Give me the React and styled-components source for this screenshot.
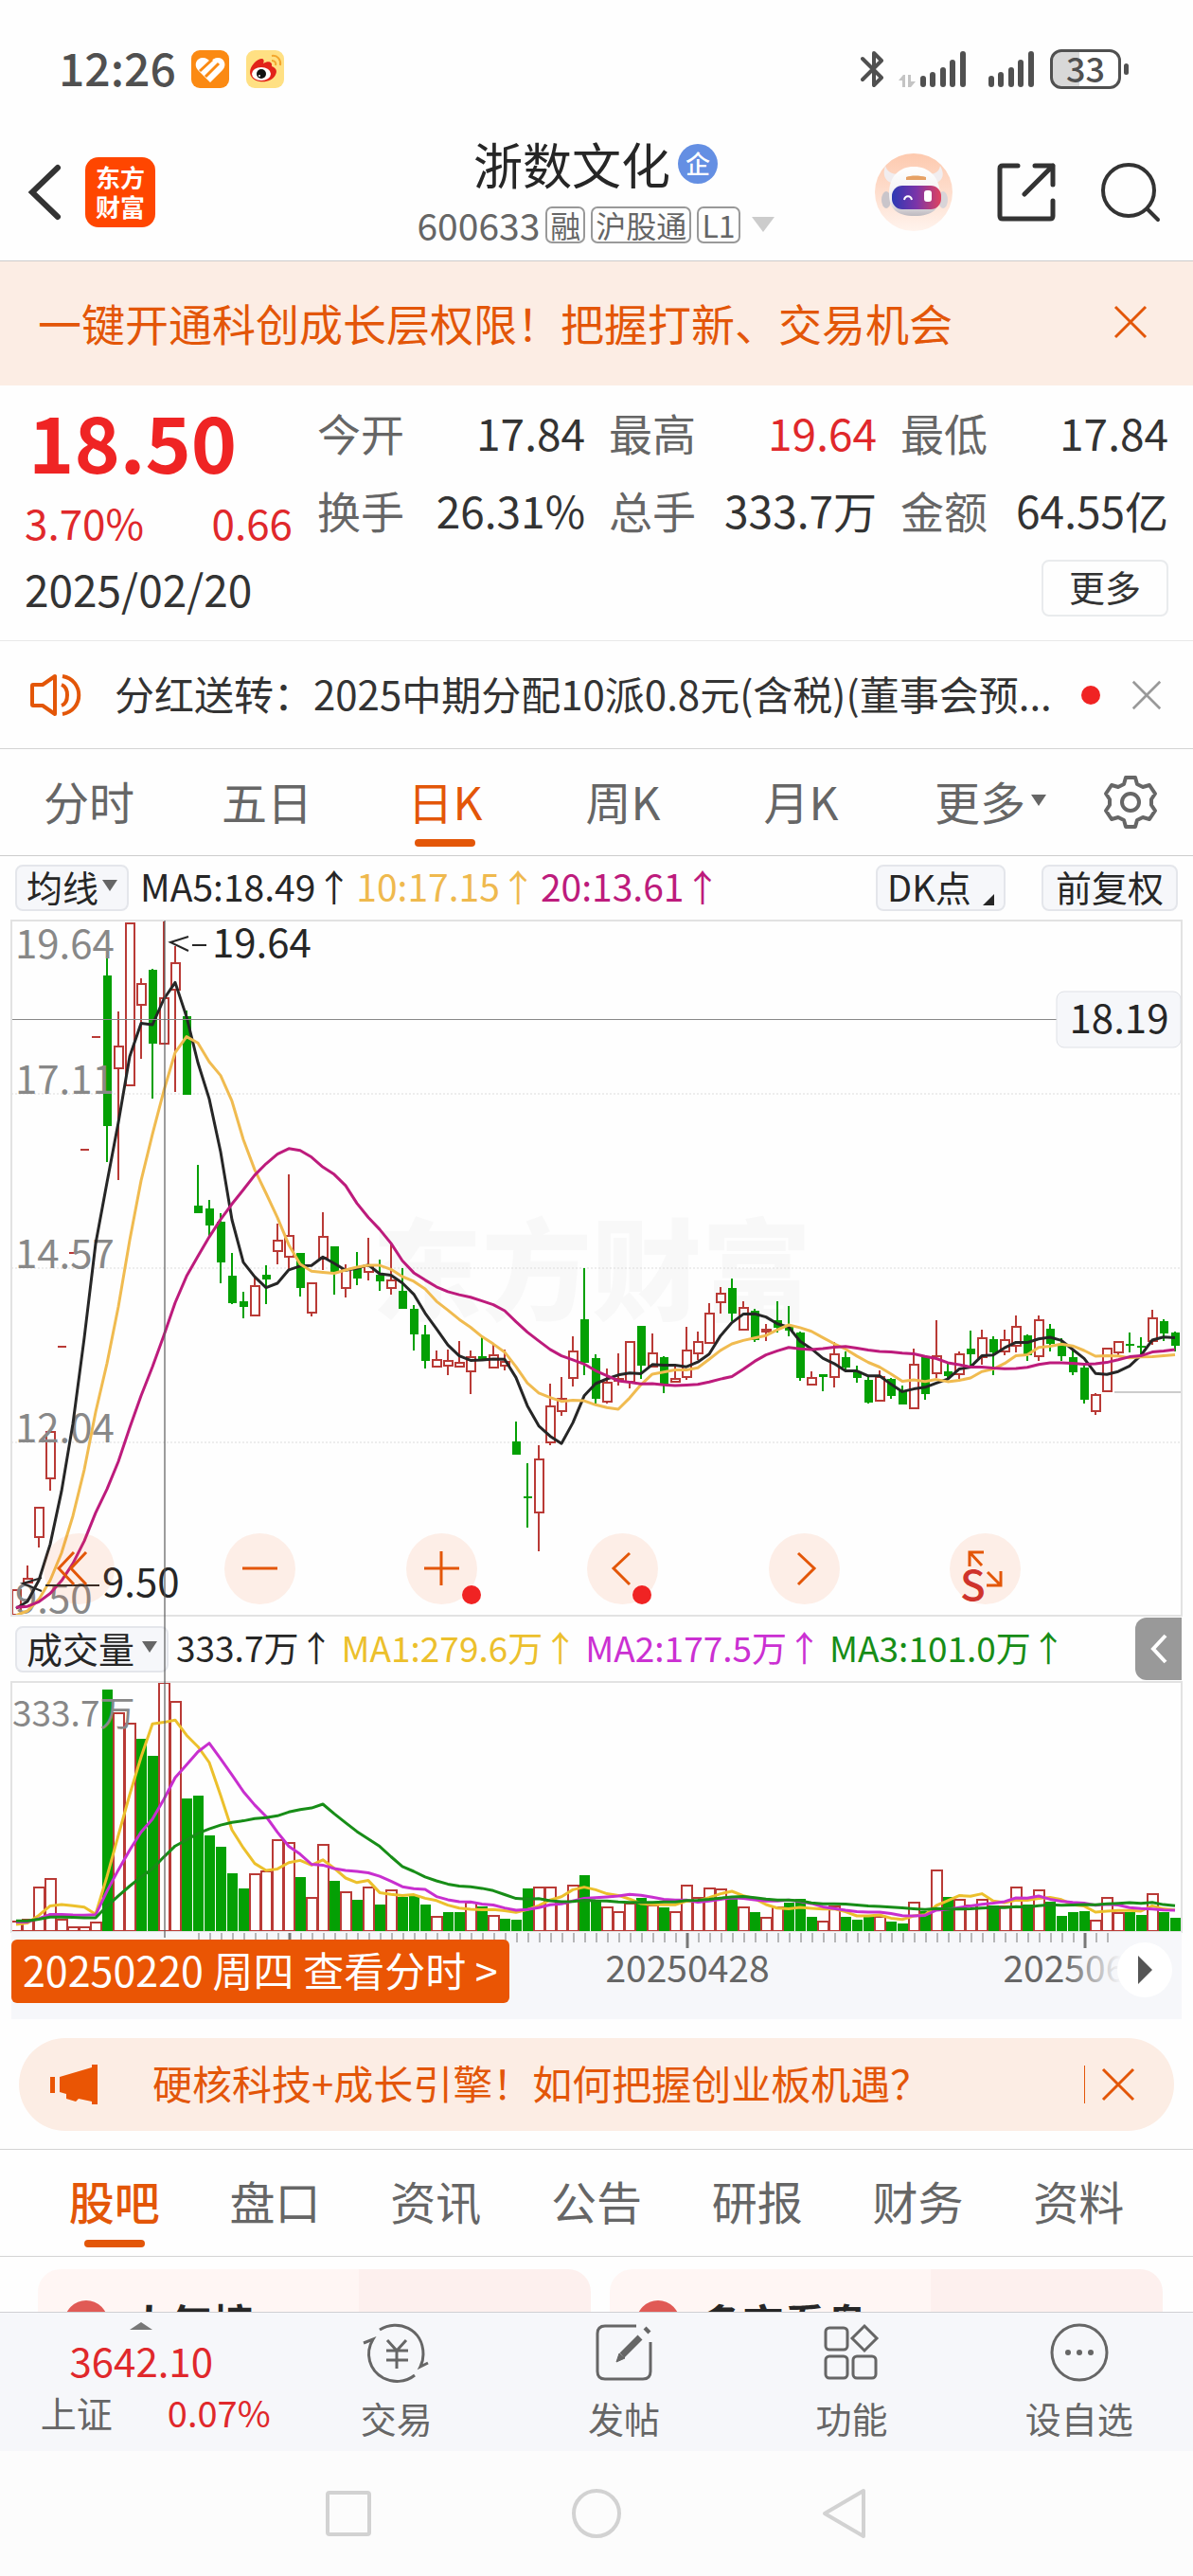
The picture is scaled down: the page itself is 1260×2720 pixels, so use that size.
import React from "react";
import styled, { createGlobalStyle } from "styled-components";

const GlobalStyle = createGlobalStyle`
  * {
    box-sizing: border-box;
  }
  body {
    margin: 0;
    background: #fefefe;
    color: #333;
    font-family: "Noto Sans CJK SC", "Noto Sans", sans-serif;
  }
  button {
    margin: 0;
    padding: 0;
    border: 0;
    background: none;
    color: inherit;
    font: inherit;
    cursor: pointer;
  }
  a {
    color: inherit;
    text-decoration: none;
  }
  svg {
    display: block;
    flex: none;
  }
`;

const ORANGE = "#e35608";
const RED = "#e0282b";
const UP = "#b93a36";
const DOWN = "#04a004";

// one row per day: [direction, high, body top, body bottom, low]
// measured downwards from the top of the price scale
const candles = [
  ["u", 707, 707, 733, 733], ["u", 681, 695, 699, 699], ["u", 620, 620, 651, 662], ["u", 540, 540, 589, 602],
  ["-", 450, 450, 450, 450], ["-", 351, 351, 351, 351], ["-", 242, 242, 242, 242], ["-", 123, 123, 123, 123],
  ["d", 37, 58, 217, 255], ["u", 96, 133, 156, 274], ["u", 3, 3, 174, 174], ["u", 61, 67, 89, 146],
  ["d", 51, 52, 130, 188], ["u", 0, 82, 130, 130], ["u", 27, 45, 73, 181], ["d", 95, 101, 184, 184],
  ["d", 258, 301, 309, 309], ["d", 295, 304, 322, 334], ["d", 309, 318, 361, 383], ["d", 351, 375, 404, 405],
  ["d", 392, 402, 408, 420], ["u", 377, 386, 417, 417], ["d", 364, 374, 379, 405], ["u", 320, 338, 349, 363],
  ["u", 268, 333, 355, 369], ["d", 351, 351, 388, 397], ["u", 383, 383, 414, 418], ["u", 308, 334, 356, 369],
  ["d", 344, 344, 372, 395], ["u", 363, 369, 388, 398], ["d", 350, 366, 378, 385], ["u", 335, 365, 371, 380],
  ["d", 358, 374, 381, 391], ["u", 341, 380, 388, 395], ["d", 367, 391, 410, 410], ["d", 406, 410, 437, 454],
  ["d", 427, 437, 465, 473], ["u", 454, 464, 471, 471], ["u", 453, 465, 470, 480], ["u", 444, 467, 471, 471],
  ["u", 454, 461, 476, 500], ["d", 439, 460, 463, 463], ["u", 448, 459, 472, 472], ["u", 453, 466, 470, 475],
  ["d", 529, 550, 564, 564], ["d", 573, 608, 610, 641], ["u", 554, 569, 625, 666], ["u", 489, 513, 551, 554],
  ["u", 482, 505, 518, 523], ["u", 439, 455, 483, 492], ["d", 367, 421, 467, 480], ["d", 458, 462, 505, 510],
  ["u", 473, 488, 508, 510], ["u", 457, 484, 486, 491], ["u", 444, 445, 487, 494], ["d", 428, 428, 470, 484],
  ["u", 436, 457, 471, 471], ["d", 460, 461, 491, 499], ["u", 471, 484, 487, 487], ["u", 429, 454, 482, 485],
  ["u", 434, 445, 457, 464], ["u", 404, 415, 446, 446], ["u", 387, 394, 403, 415], ["d", 378, 388, 415, 423],
  ["u", 402, 409, 432, 432], ["d", 410, 412, 443, 445], ["u", 426, 432, 434, 444], ["d", 402, 422, 430, 435],
  ["d", 407, 428, 433, 439], ["d", 434, 435, 483, 486], ["u", 476, 483, 490, 490], ["d", 479, 479, 482, 497],
  ["u", 445, 458, 482, 493], ["d", 455, 461, 472, 474], ["d", 470, 477, 483, 488], ["d", 482, 485, 509, 510],
  ["u", 475, 482, 507, 507], ["d", 483, 484, 502, 505], ["d", 491, 497, 511, 511], ["u", 452, 469, 515, 515],
  ["d", 459, 460, 500, 506], ["u", 422, 460, 478, 483], ["d", 467, 476, 481, 485], ["u", 455, 458, 479, 484],
  ["d", 433, 452, 458, 471], ["u", 432, 441, 461, 469], ["d", 439, 442, 456, 480], ["u", 432, 443, 455, 459],
  ["u", 417, 429, 449, 456], ["d", 437, 438, 459, 465], ["u", 417, 422, 460, 465], ["d", 426, 431, 447, 455],
  ["d", 441, 448, 460, 465], ["d", 453, 461, 477, 480], ["d", 470, 472, 506, 510], ["u", 499, 501, 518, 522],
  ["u", 452, 452, 497, 497], ["u", 445, 445, 456, 459], ["d", 435, 447, 448, 456], ["d", 440, 449, 450, 458],
  ["u", 411, 420, 444, 448], ["d", 421, 423, 436, 444], ["d", 434, 435, 449, 455],
];

const volumes = [
  12, 14, 48, 57, 14, 6, 6, 11, 256, 232, 221, 204, 186, 264, 244, 141, 144, 102, 90, 62, 46, 62, 65, 98, 95, 58,
  37, 93, 54, 43, 34, 48, 29, 45, 37, 38, 29, 17, 21, 21, 32, 27, 18, 14, 13, 46, 48, 48, 31, 50, 60, 34,
  27, 22, 31, 36, 29, 26, 22, 50, 37, 47, 46, 35, 27, 21, 16, 27, 31, 35, 16, 12, 28, 16, 13, 16, 17, 11,
  9, 32, 22, 66, 37, 35, 29, 35, 28, 28, 48, 29, 45, 32, 17, 21, 22, 13, 37, 21, 21, 18, 41, 21, 15,
];

// days whose volume bar is filled green
const fallingDays = [
  8, 11, 12, 15, 16, 17, 18, 19, 20, 25, 28, 30, 32, 34, 35, 36, 38, 39, 41, 43, 44, 45, 50, 51, 55, 57, 63, 65,
  68, 69, 70, 73, 74, 75, 77, 78, 80, 82, 86, 89, 91, 92, 93, 94, 98, 99, 101, 102,
];

// closes and volumes from before the visible range, used by the averages
const closesBefore = [...Array(10).fill(717), ...Array(5).fill(741), ...Array(4).fill(731)];
const volumesBefore = [...Array(15).fill(13), ...Array(4).fill(7)];

const STEP = 12;
const FIRST = 5;
const PRICE_H = 734;
const VOLUME_H = 264;
const WIDTH = 1236;

const xOf = (i) => FIRST + i * STEP;

const average = (before, values, days) => {
  const all = [...before, ...values];
  return values.map((_, i) => {
    const end = i + before.length + 1;
    return all.slice(end - days, end).reduce((a, b) => a + b, 0) / days;
  });
};

const toPoints = (values) => values.map((v, i) => `${xOf(i)},${v.toFixed(1)}`).join(" ");

const closes = candles.map(([dir, , top, bottom]) => (dir === "d" ? bottom : top));

const priceLines = [
  { days: 5, color: "#262626" },
  { days: 10, color: "#f0bb50" },
  { days: 20, color: "#bd1b7c" },
];

const volumeLines = [
  { days: 5, color: "#ecc02c" },
  { days: 10, color: "#c82fcf" },
  { days: 20, color: "#178d17" },
];

const PriceChart = () => (
  <ChartSvg viewBox={`0 0 ${WIDTH} ${PRICE_H}`} role="img" aria-label="日K">
    <text x="381" y="413" fontSize="116" fontWeight="900" fill="#f8f8f8">
      东方财富
    </text>
    {[183, 367, 551].map((y) => (
      <line key={y} x1="0" x2={WIDTH} y1={y} y2={y} stroke="#dcdcdc" strokeDasharray="2 2" />
    ))}
    <line x1="1165" x2={WIDTH} y1="498" y2="498" stroke="#ccc" strokeWidth="2" />
    {candles.map(([dir, high, top, bottom, low], i) => {
      const x = xOf(i);
      if (dir === "-") {
        return <line key={i} x1={x - 4} x2={x + 5} y1={top} y2={top} stroke={UP} strokeWidth="2" />;
      }
      if (dir === "d") {
        return (
          <g key={i} fill={DOWN}>
            <rect x={x - 1} y={high} width="2" height={low - high} />
            <rect x={x - 4} y={top} width="9" height={Math.max(bottom - top, 2)} />
          </g>
        );
      }
      return (
        <g key={i} fill="none" stroke={UP} strokeWidth="2">
          <path d={`M${x} ${high}V${top}M${x} ${bottom}V${low}`} />
          <rect x={x - 4} y={top} width="9" height={Math.max(bottom - top, 1)} />
        </g>
      );
    })}
    <g fontSize="42" fill="#888">
      <text x="4" y="40">19.64</text>
      <text x="4" y="183">17.11</text>
      <text x="4" y="367">14.57</text>
      <text x="4" y="551">12.04</text>
      <text x="4" y="731">9.50</text>
    </g>
    {priceLines.map(({ days, color }) => (
      <polyline
        key={days}
        points={toPoints(average(closesBefore, closes, days))}
        fill="none"
        stroke={color}
        strokeWidth="3"
        strokeLinejoin="round"
      />
    ))}
    <rect x="0" y="104" width={WIDTH} height="1" fill="#888" />
    <g fill="none" stroke="#262626" strokeWidth="2">
      <path d="M187 17L168 23L187 32M191 26H206" />
      <path d="M32 694L12 700L32 708M36 702H93" />
    </g>
    <g fontSize="42" fill="#262626">
      <text x="212" y="39">19.64</text>
      <text x="96" y="714">9.50</text>
    </g>
    <rect x="1104" y="75" width="131" height="59" rx="8" fill="#f6f7fa" stroke="#dfe1e6" />
    <text x="1170" y="119" fontSize="42" fill="#262626" textAnchor="middle">
      18.19
    </text>
  </ChartSvg>
);

const VolumeChart = () => (
  <ChartSvg viewBox={`0 0 ${WIDTH} ${VOLUME_H}`} role="img" aria-label="成交量">
    {volumes.map((v, i) => {
      const x = xOf(i);
      return fallingDays.includes(i) ? (
        <rect key={i} x={x - 5} y={VOLUME_H - v} width="11" height={v} fill={DOWN} />
      ) : (
        <rect
          key={i}
          x={x - 5}
          y={VOLUME_H - v + 1}
          width="11"
          height={v - 2}
          fill="#fff"
          stroke={UP}
          strokeWidth="2"
        />
      );
    })}
    {volumeLines.map(({ days, color }) => (
      <polyline
        key={days}
        points={toPoints(average(volumesBefore, volumes, days).map((v) => VOLUME_H - v))}
        fill="none"
        stroke={color}
        strokeWidth="3"
        strokeLinejoin="round"
      />
    ))}
    <text x="1" y="47" fontSize="37" fill="#888">
      333.7万
    </text>
  </ChartSvg>
);

const TimeAxis = () => (
  <ChartSvg viewBox={`0 0 ${WIDTH} 92`}>
    <defs>
      <linearGradient id="fade">
        <stop offset="0" stopColor="#f6f7fa" stopOpacity="0" />
        <stop offset="1" stopColor="#f6f7fa" />
      </linearGradient>
    </defs>
    {candles.map((_, i) => {
      if (i < 16 || i > 96) return null;
      const big = i === 24 || i === 59 || i === 94;
      return (
        <line
          key={i}
          x1={xOf(i) + 1}
          x2={xOf(i) + 1}
          y1="1"
          y2={big ? 17 : 11}
          stroke="#777"
          strokeWidth={big ? 3 : 1}
        />
      );
    })}
    <g fontSize="39" fill="#666" textAnchor="middle">
      <text x="714" y="53">20250428</text>
      <text x="1134" y="53">20250630</text>
    </g>
    <rect x="1112" y="20" width="60" height="60" fill="url(#fade)" />
    <rect x="1172" y="0" width="64" height="92" fill="#f6f7fa" />
    <circle cx="1197" cy="40" r="29" fill="#fff" />
    <path d="M1190 25L1205 40L1190 55Z" fill="#555" />
  </ChartSvg>
);

const Signal = () => (
  <svg width="50" height="40" viewBox="0 0 50 40" fill="none" stroke="#505050" strokeWidth="6" strokeLinecap="round">
    <path d="M4 30V36M14 26V36M25 21V36M35 13V36M46 4V36" />
  </svg>
);

const StatusIcons = () => (
  <StatusGroup>
    <svg width="26" height="40" viewBox="0 0 26 40" fill="none" stroke="#505050" strokeWidth="4" strokeLinejoin="round" strokeLinecap="round">
      <path d="M2 9L22 29L14 37V3L22 11L2 31" />
    </svg>
    <DataArrows width="18" height="40" viewBox="0 0 18 40" fill="#c4c4c4">
      <path d="M0 32L5 26H7V39H4V32ZM10 26H13V33H18L13 39H10Z" />
    </DataArrows>
    <Signal />
    <SignalGap />
    <Signal />
    <Battery>33</Battery>
    <BatteryTip />
  </StatusGroup>
);

const Robot = () => (
  <svg width="82" height="82" viewBox="0 0 82 82">
    <defs>
      <linearGradient id="halo" x1="0" y1="0" x2="0" y2="1">
        <stop offset="0" stopColor="#fdc9ae" />
        <stop offset="1" stopColor="#fff3ed" />
      </linearGradient>
      <linearGradient id="visor">
        <stop offset="0" stopColor="#2c39b4" />
        <stop offset="0.5" stopColor="#7b34a8" />
        <stop offset="1" stopColor="#e0435e" />
      </linearGradient>
      <linearGradient id="shell" x1="0" y1="0" x2="0" y2="1">
        <stop offset="0" stopColor="#fff" />
        <stop offset="0.7" stopColor="#f0eef0" />
        <stop offset="1" stopColor="#bdb9bf" />
      </linearGradient>
    </defs>
    <circle cx="41" cy="41" r="41" fill="url(#halo)" />
    <path d="M11 13C8 22 10 28 17 31L26 22C17 22 13 19 11 13ZM69 13C74 22 72 28 65 31L56 22C64 22 68 19 69 13Z" fill="#f1edef" />
    <ellipse cx="12" cy="49" rx="5" ry="9" fill="#c9c5ca" />
    <ellipse cx="72" cy="49" rx="5" ry="9" fill="#d8d4d8" />
    <path d="M15 43C15 24 26 14 41 14C57 14 68 24 69 43C70 58 61 66 42 66C23 66 15 58 15 43Z" fill="url(#shell)" />
    <path d="M33 25C38 23 47 23 54 25V28H33Z" fill="#e6a165" />
    <rect x="18" y="34" width="52" height="25" rx="11" fill="url(#visor)" />
    <path d="M31 49C32 44 38 44 39 49" fill="none" stroke="#fff" strokeWidth="2" />
    <rect x="52" y="39" width="8" height="12" rx="3" fill="#fff" />
  </svg>
);

const Cross = ({ size, color, width = 3 }) => (
  <svg width={size} height={size} viewBox="0 0 36 36" fill="none" stroke={color} strokeWidth={width}>
    <path d="M2 2L34 34M34 2L2 34" />
  </svg>
);

const Gear = () => (
  <svg width="58" height="58" viewBox="0 0 58 58" fill="none" stroke="#666" strokeWidth="4" strokeLinejoin="round">
    <path d="M24 3H34L36 10L42 13L49 11L55 20L51 26V32L55 38L49 47L42 45L36 48L34 55H24L22 48L16 45L9 47L3 38L7 32V26L3 20L9 11L16 13L22 10Z" />
    <circle cx="29" cy="29" r="9" />
  </svg>
);

const controls = [
  { label: "最早", path: "M32 20L16 37L32 54M45 20L29 37L45 54" },
  { label: "缩小", path: "M19 37H56" },
  { label: "放大", path: "M19 37H56M37 19V55", dot: 59 },
  { label: "向前", path: "M45 21L28 37L45 54", dot: 48 },
  { label: "向后", path: "M31 21L48 37L31 54" },
  { label: "全屏", path: "M21 35V20H36M21 20L34 34M54 40V55H39M54 55L40 41", full: true },
];

const kTabs = ["分时", "五日", "日K", "周K", "月K"];
const infoTabs = ["股吧", "盘口", "资讯", "公告", "研报", "财务", "资料"];

const quotes = [
  ["今开", "17.84"],
  ["最高", "19.64", true],
  ["最低", "17.84"],
  ["换手", "26.31%"],
  ["总手", "333.7万"],
  ["金额", "64.55亿"],
];

const tools = [
  {
    label: "交易",
    icon: (
      <>
        <path d="M18 9C37 -3 64 8 64 35C64 40 63 44 61 48L69 44" />
        <path d="M1 23L11 19C2 34 7 52 22 60C32 65 45 65 55 57" />
        <path d="M26 20L36 31L46 20M25 31H48M25 41H48M36 31V50" />
      </>
    ),
  },
  {
    label: "发帖",
    icon: (
      <>
        <path d="M49 5H16Q8 5 8 13V53Q8 61 16 61H56Q64 61 64 53V22" />
        <path d="M59 11L62 8M53 17L34 36" strokeWidth="7" />
        <path d="M28 43L31 34L37 39Z" fill="#666" strokeWidth="1" />
      </>
    ),
  },
  {
    label: "功能",
    icon: (
      <>
        <rect x="9" y="7" width="23" height="23" rx="4" />
        <rect x="9" y="37" width="23" height="23" rx="4" />
        <rect x="38" y="37" width="24" height="23" rx="4" />
        <path d="M50 5L63 18L50 31L37 18Z" />
      </>
    ),
  },
  {
    label: "设自选",
    icon: (
      <>
        <circle cx="36" cy="33" r="29" />
        <g fill="#666" stroke="none">
          <circle cx="24" cy="33" r="3" />
          <circle cx="36" cy="33" r="3" />
          <circle cx="48" cy="33" r="3" />
        </g>
      </>
    ),
  },
];

const App = () => {
  return (
    <Page>
      <GlobalStyle />
      <StatusBar>
        <StatusGroup>
          <Time>12:26</Time>
          <svg width="40" height="40" viewBox="0 0 40 40">
            <rect width="40" height="40" rx="9" fill="#fb8a13" />
            <path d="M20 34L7 21C2 15 6 8 12 8C16 8 18 10 20 12C22 10 25 8 28 8C35 8 38 16 33 21Z" fill="#fff" />
            <path d="M9 22L22 10M15 28L29 14" stroke="#fb8a13" strokeWidth="3" />
          </svg>
          <IconGap />
          <svg width="40" height="40" viewBox="0 0 40 40">
            <rect width="40" height="40" rx="9" fill="#ffe083" />
            <path d="M4 23C4 17 11 9 17 9C20 10 18 14 18 14C23 11 28 12 27 17C32 19 33 22 31 26C28 32 21 34 14 33C8 32 4 28 4 23Z" fill="#e2231a" />
            <ellipse cx="16" cy="25" rx="10" ry="7" fill="#fff" />
            <circle cx="16" cy="25" r="5" fill="#111" />
            <circle cx="14" cy="27" r="1" fill="#fff" />
            <path d="M27 6C33 5 37 10 36 16M27 11C30 11 32 13 31 16" stroke="#f3a62d" strokeWidth="2" fill="none" />
          </svg>
        </StatusGroup>
        <StatusIcons />
      </StatusBar>

      <Header>
        <HeaderSide>
          <button aria-label="返回">
            <svg width="38" height="62" viewBox="0 0 38 62" fill="none" stroke="#333" strokeWidth="6" strokeLinecap="round">
              <path d="M33 5L6 31L33 57" />
            </svg>
          </button>
          <Logo>
            <span>东方</span>
            <span>财富</span>
          </Logo>
        </HeaderSide>
        <HeaderCenter>
          <StockName>
            浙数文化<Badge>企</Badge>
          </StockName>
          <StockCode>
            600633
            <Tag>融</Tag>
            <Tag>沪股通</Tag>
            <Tag>L1</Tag>
            <svg width="24" height="16" viewBox="0 0 24 16">
              <path d="M0 0H24L12 16Z" fill="#ccc" />
            </svg>
          </StockCode>
        </HeaderCenter>
        <HeaderSide $end>
          <button aria-label="助手">
            <Robot />
          </button>
          <button aria-label="分享">
            <svg width="62" height="62" viewBox="0 0 62 62" fill="none" stroke="#333" strokeWidth="5" strokeLinecap="round" strokeLinejoin="round">
              <path d="M22 3H6Q3 3 3 6V56Q3 59 6 59H56Q59 59 59 56V40M40 3H59V23M59 3L29 33" />
            </svg>
          </button>
          <button aria-label="搜索">
            <svg width="64" height="64" viewBox="0 0 64 64" fill="none" stroke="#333" strokeWidth="4" strokeLinecap="round">
              <circle cx="30" cy="30" r="27" />
              <path d="M50 50L61 61" />
            </svg>
          </button>
        </HeaderSide>
      </Header>

      <TopBanner>
        <span>一键开通科创成长层权限！把握打新、交易机会</span>
        <button aria-label="关闭">
          <Cross size={36} color={ORANGE} />
        </button>
      </TopBanner>

      <Quote>
        <QuoteTop>
          <PriceBlock>
            <Price>18.50</Price>
            <Change>
              <span>3.70%</span>
              <span>0.66</span>
            </Change>
          </PriceBlock>
          <QuoteGrid>
            {quotes.map(([label, value, red]) => (
              <QuoteItem key={label}>
                <dt>{label}</dt>
                <QuoteValue $red={red}>{value}</QuoteValue>
              </QuoteItem>
            ))}
          </QuoteGrid>
        </QuoteTop>
        <DateRow>
          <span>2025/02/20</span>
          <MoreButton>更多</MoreButton>
        </DateRow>
      </Quote>

      <Notice>
        <svg width="56" height="48" viewBox="0 0 56 48" fill="none" stroke={ORANGE} strokeWidth="4" strokeLinejoin="round">
          <path d="M26 4V44L13 35H3Q2 35 2 34V14Q2 13 3 13H13Z" />
          <path d="M33 13C41 16 41 32 33 35M34 4C57 8 57 40 34 44" />
        </svg>
        <NoticeText href="#notice">分红送转：2025中期分配10派0.8元(含税)(董事会预...</NoticeText>
        <RedDot />
        <button aria-label="关闭提示">
          <Cross size={32} color="#999" />
        </button>
      </Notice>

      <KTabs>
        {kTabs.map((tab) => (
          <KTab key={tab} $active={tab === "日K"}>
            {tab}
          </KTab>
        ))}
        <KTab>
          更多
          <Caret />
        </KTab>
        <GearButton aria-label="设置">
          <Gear />
        </GearButton>
      </KTabs>

      <Indicators>
        <SmallButton>
          均线
          <Caret />
        </SmallButton>
        <MaText $color="#262626">MA5:18.49↑</MaText>
        <MaText $color="#efb94e">10:17.15↑</MaText>
        <MaText $color="#bd1b7c">20:13.61↑</MaText>
        <Spacer />
        <SmallButton $wide>
          DK点
          <Corner />
        </SmallButton>
        <SmallButton $last>前复权</SmallButton>
      </Indicators>

      <ChartPanel>
        <Crosshair />
        <PricePlot>
          <PriceChart />
          <Controls>
            {controls.map(({ label, path, dot, full }) => (
              <ControlButton key={label} aria-label={label}>
                <svg width="75" height="75" viewBox="0 0 75 75" fill="none" stroke={ORANGE} strokeWidth="3">
                  <path d={path} />
                  {full && (
                    <text x="11" y="71" fontSize="44" fontWeight="500" fill="#cf332c" stroke="none">
                      S
                    </text>
                  )}
                </svg>
                {dot && <ControlDot $left={dot} />}
              </ControlButton>
            ))}
          </Controls>
        </PricePlot>
        <VolumeHead>
          <SmallButton $volume>
            成交量
            <Caret />
          </SmallButton>
          <VolumeText $color="#262626">333.7万↑</VolumeText>
          <VolumeText $color="#ecc02c">MA1:279.6万↑</VolumeText>
          <VolumeText $color="#cb30d2">MA2:177.5万↑</VolumeText>
          <VolumeText $color="#178d17">MA3:101.0万↑</VolumeText>
          <Collapse aria-label="展开">
            <svg width="20" height="32" viewBox="0 0 20 32" fill="none" stroke="#fff" strokeWidth="4">
              <path d="M17 2L4 16L17 30" />
            </svg>
          </Collapse>
        </VolumeHead>
        <VolumePlot>
          <VolumeChart />
        </VolumePlot>
        <Axis>
          <TimeAxis />
          <DayTag>20250220 周四 查看分时 &gt;</DayTag>
        </Axis>
      </ChartPanel>

      <Promo>
        <svg width="50" height="44" viewBox="0 0 50 44" fill="#ea5504">
          <path d="M0 14H5V31H0ZM10 14L44 4V1H50V43H44V40L30 37L27 40L17 37V32L10 30Z" />
        </svg>
        <PromoText href="#promo">硬核科技+成长引擎！如何把握创业板机遇？</PromoText>
        <PromoLine />
        <button aria-label="关闭推广">
          <Cross size={36} color={ORANGE} />
        </button>
      </Promo>

      <InfoTabs>
        {infoTabs.map((tab) => (
          <InfoTab key={tab} $active={tab === "股吧"}>
            {tab}
          </InfoTab>
        ))}
      </InfoTabs>

      <Feed>
        <FeedCard>
          <FeedDot />
          人气榜
        </FeedCard>
        <FeedCard>
          <FeedDot />
          多空看盘
        </FeedCard>
      </Feed>

      <BottomBar>
        <IndexBlock>
          <UpMark />
          <IndexValue>3642.10</IndexValue>
          <IndexRow>
            <span>上证</span>
            <IndexChange>0.07%</IndexChange>
          </IndexRow>
        </IndexBlock>
        {tools.map(({ label, icon }) => (
          <Tool key={label}>
            <svg width="72" height="66" viewBox="0 0 72 66" fill="none" stroke="#666" strokeWidth="3">
              {icon}
            </svg>
            {label}
          </Tool>
        ))}
      </BottomBar>

      <SystemNav>
        <button aria-label="任务">
          <svg width="50" height="50" viewBox="0 0 50 50" fill="none" stroke="#d2d2d2" strokeWidth="4">
            <rect x="3" y="3" width="44" height="44" rx="2" />
          </svg>
        </button>
        <button aria-label="主页">
          <svg width="54" height="54" viewBox="0 0 54 54" fill="none" stroke="#d2d2d2" strokeWidth="4">
            <circle cx="27" cy="27" r="24" />
          </svg>
        </button>
        <button aria-label="后退">
          <svg width="50" height="54" viewBox="0 0 50 54" fill="none" stroke="#d2d2d2" strokeWidth="4" strokeLinejoin="round">
            <path d="M45 3V51L4 27Z" />
          </svg>
        </button>
      </SystemNav>
    </Page>
  );
};

const Page = styled.div`
  display: flex;
  flex-direction: column;
`;

const StatusBar = styled.div`
  display: flex;
  justify-content: space-between;
  align-items: center;
  height: 145px;
  padding: 0 68px 0 62px;
`;

const StatusGroup = styled.div`
  display: flex;
  align-items: center;
`;

const Time = styled.span`
  margin-right: 16px;
  padding-bottom: 6px;
  color: #505050;
  font-size: 48px;
  font-weight: 500;
  line-height: 56px;
`;

const IconGap = styled.span`
  width: 18px;
`;

const DataArrows = styled.svg`
  margin: 0 4px 0 14px;
`;

const SignalGap = styled.span`
  width: 22px;
`;

const Battery = styled.span`
  display: flex;
  align-items: center;
  justify-content: center;
  width: 75px;
  height: 42px;
  margin-left: 16px;
  padding-bottom: 4px;
  border: 3px solid #505050;
  border-radius: 12px;
  background: linear-gradient(90deg, #d8d8d8 40%, #fff 40%);
  color: #505050;
  font-size: 36px;
  font-weight: 500;
  line-height: 36px;
`;

const BatteryTip = styled.span`
  width: 5px;
  height: 12px;
  margin-left: 3px;
  border-radius: 3px;
  background: #505050;
`;

const Header = styled.header`
  display: grid;
  grid-template-columns: 1fr auto 1fr;
  align-items: center;
  height: 131px;
  padding: 0 34px 14px 28px;
  border-bottom: 1px solid #ccc;
`;

const HeaderSide = styled.div`
  display: flex;
  align-items: center;
  justify-content: ${(p) => (p.$end ? "flex-end" : "flex-start")};
  gap: ${(p) => (p.$end ? "47px" : "24px")};
`;

const Logo = styled.div`
  display: flex;
  flex-direction: column;
  align-items: center;
  justify-content: center;
  width: 74px;
  height: 74px;
  padding-bottom: 2px;
  border-radius: 14px;
  background: #ff4600;
  color: #fff;
  font-size: 26px;
  font-weight: 700;
  line-height: 31px;
`;

const HeaderCenter = styled.div`
  display: flex;
  flex-direction: column;
  align-items: center;
  padding-left: 4px;
`;

const StockName = styled.h1`
  display: flex;
  align-items: center;
  gap: 8px;
  margin: 0 0 12px;
  color: #262626;
  font-size: 52px;
  font-weight: 400;
  line-height: 56px;
`;

const Badge = styled.span`
  width: 42px;
  height: 42px;
  border-radius: 50%;
  background: #648fe3;
  color: #fff;
  font-size: 26px;
  font-weight: 500;
  line-height: 39px;
  text-align: center;
`;

const StockCode = styled.div`
  display: flex;
  align-items: center;
  gap: 6px;
  color: #666;
  font-size: 39px;
  line-height: 48px;

  svg {
    margin-left: 6px;
  }
`;

const Tag = styled.span`
  padding: 0 3px;
  border: 2px solid #999;
  border-radius: 7px;
  font-size: 32px;
  line-height: 35px;
`;

const TopBanner = styled.div`
  display: flex;
  align-items: center;
  justify-content: space-between;
  height: 131px;
  padding: 0 48px 4px 40px;
  background: #fcede4;
  color: ${ORANGE};
  font-size: 46px;
  line-height: 64px;
`;

const Quote = styled.section`
  padding: 8px 26px 25px;
  border-bottom: 1px solid #e8e8e8;
  font-size: 46px;
`;

const QuoteTop = styled.div`
  display: flex;
  gap: 26px;
`;

const PriceBlock = styled.div`
  width: 283px;
  padding-top: 4px;
`;

const Price = styled.div`
  padding-left: 4px;
  color: #ef2424;
  font-size: 82px;
  font-weight: 700;
  line-height: 92px;
`;

const Change = styled.div`
  display: flex;
  justify-content: space-between;
  color: ${RED};
  font-size: 44px;
  line-height: 80px;
`;

const QuoteGrid = styled.dl`
  display: grid;
  flex: 1;
  grid-template-columns: repeat(3, 1fr);
  align-content: start;
  column-gap: 25px;
  margin: 0;
`;

const QuoteItem = styled.div`
  display: flex;
  justify-content: space-between;
  color: #666;
  line-height: 82px;
`;

const QuoteValue = styled.dd`
  margin: 0;
  color: ${(p) => (p.$red ? RED : "#333")};
`;

const DateRow = styled.div`
  display: flex;
  align-items: center;
  justify-content: space-between;
  height: 60px;
`;

const MoreButton = styled.button`
  width: 134px;
  height: 60px;
  padding-bottom: 4px;
  border: 2px solid #e9ebed;
  border-radius: 8px;
  font-size: 38px;
  line-height: 50px;
`;

const Notice = styled.section`
  display: flex;
  align-items: center;
  height: 114px;
  padding: 0 33px 0 32px;
  border-bottom: 1px solid #d4d4d4;
`;

const NoticeText = styled.a`
  flex: 1;
  margin-left: 33px;
  padding-bottom: 4px;
  overflow: hidden;
  font-size: 42px;
  line-height: 60px;
  white-space: nowrap;
`;

const RedDot = styled.span`
  width: 20px;
  height: 20px;
  margin-right: 33px;
  border-radius: 50%;
  background: #f02323;
`;

const Caret = styled.span`
  flex: none;
  border: 8px solid transparent;
  border-top: 12px solid #666;
  border-bottom: 0;
`;

const KTabs = styled.nav`
  display: grid;
  grid-template-columns: repeat(5, 188fr) 212fr 108fr;
  height: 113px;
  border-bottom: 1px solid #ccc;
`;

const underline = (p) =>
  p.$active &&
  `
  &::after {
    content: "";
    position: absolute;
    bottom: 9px;
    left: 50%;
    width: 64px;
    height: 8px;
    margin-left: -32px;
    border-radius: 4px;
    background: ${ORANGE};
  }
`;

const KTab = styled.button`
  position: relative;
  display: flex;
  align-items: center;
  justify-content: center;
  gap: 6px;
  padding-bottom: 4px;
  color: ${(p) => (p.$active ? ORANGE : "#666")};
  font-size: 48px;
  ${underline}
`;

const GearButton = styled.button`
  display: flex;
  align-items: center;
  justify-content: center;
  padding-right: 24px;
`;

const Indicators = styled.div`
  display: flex;
  align-items: center;
  height: 68px;
  padding: 0 16px 2px;
`;

const smallPadding = (p) => (p.$last ? "0 13px 4px" : "0 10px 4px");

const SmallButton = styled.button`
  display: flex;
  align-items: center;
  justify-content: space-between;
  gap: ${(p) => (p.$volume ? "8px" : "4px")};
  height: 49px;
  min-width: ${(p) => (p.$wide ? "137px" : "0")};
  margin-left: ${(p) => (p.$last ? "38px" : "0")};
  padding: ${smallPadding};
  border: 2px solid #e4e6eb;
  border-radius: 8px;
  background: #f6f7fa;
  color: #262626;
  font-size: 38px;
  line-height: 41px;
`;

const Corner = styled.span`
  align-self: flex-end;
  border: 6px solid transparent;
  border-right-color: #262626;
  border-bottom-color: #262626;
`;

const MaText = styled.span`
  margin-left: 4px;
  padding-bottom: 4px;
  color: ${(p) => p.$color};
  font-size: 39px;
  line-height: 56px;

  ${SmallButton} + & {
    margin-left: 12px;
  }
`;

const Spacer = styled.span`
  flex: 1;
`;

const ChartPanel = styled.section`
  position: relative;
  margin: 0 12px;
`;

const Crosshair = styled.div`
  position: absolute;
  top: 0;
  bottom: 86px;
  left: 13%;
  z-index: 2;
  width: 2px;
  background: rgba(90, 90, 90, 0.6);
`;

const ChartSvg = styled.svg`
  width: 100%;
  height: auto;
  font-family: "Noto Sans CJK SC", sans-serif;
`;

const PricePlot = styled.div`
  position: relative;
  outline: 2px solid #e2e2e2;
  outline-offset: -1px;
`;

const Controls = styled.div`
  position: absolute;
  right: 170px;
  bottom: 12px;
  left: 34px;
  display: flex;
  justify-content: space-between;
`;

const ControlButton = styled.button`
  position: relative;
  width: 75px;
  height: 75px;
  border-radius: 50%;
  background: rgba(250, 100, 30, 0.1);
`;

const ControlDot = styled.span`
  position: absolute;
  bottom: 0;
  left: ${(p) => p.$left}px;
  width: 20px;
  height: 20px;
  border-radius: 50%;
  background: #f02323;
`;

const VolumeHead = styled.div`
  display: flex;
  align-items: center;
  height: 70px;
  padding-left: 4px;
`;

const VolumeText = styled.span`
  margin-left: 8px;
  padding-bottom: 4px;
  color: ${(p) => p.$color};
  font-size: 37px;
  line-height: 56px;
  white-space: nowrap;
`;

const Collapse = styled.button`
  display: flex;
  align-items: center;
  justify-content: center;
  width: 49px;
  height: 66px;
  margin-left: auto;
  border-radius: 12px 0 0 12px;
  background: #999;
`;

const VolumePlot = styled.div`
  outline: 2px solid #e2e2e2;
  outline-offset: -1px;
`;

const Axis = styled.div`
  position: relative;
  background: #f6f7fa;
`;

const DayTag = styled.button`
  position: absolute;
  top: 8px;
  left: 0;
  z-index: 3;
  height: 67px;
  padding: 0 12px 6px;
  border-radius: 6px;
  background: #ea5504;
  color: #fff;
  font-size: 43px;
  line-height: 60px;
  white-space: nowrap;
`;

const Promo = styled.section`
  display: flex;
  align-items: center;
  height: 98px;
  margin: 20px 20px 19px;
  padding: 0 41px 0 33px;
  border-radius: 49px;
  background: #fcede4;
  color: ${ORANGE};
`;

const PromoText = styled.a`
  flex: 1;
  margin-left: 58px;
  padding-bottom: 4px;
  font-size: 42px;
  line-height: 60px;
`;

const PromoLine = styled.span`
  width: 1px;
  height: 40px;
  margin-right: 17px;
  background: ${ORANGE};
`;

const InfoTabs = styled.nav`
  display: flex;
  height: 114px;
  padding: 0 36px;
  border-top: 1px solid #d4d4d4;
  border-bottom: 1px solid #d4d4d4;
`;

const InfoTab = styled.button`
  position: relative;
  flex: 1;
  padding-bottom: 6px;
  color: ${(p) => (p.$active ? ORANGE : "#666")};
  font-size: 48px;
  font-weight: ${(p) => (p.$active ? 500 : 400)};
  ${underline}
`;

const Feed = styled.section`
  display: grid;
  grid-template-columns: 1fr 1fr;
  gap: 20px;
  height: 58px;
  padding: 13px 32px 0 40px;
  overflow: hidden;
`;

const FeedCard = styled.article`
  display: flex;
  align-items: center;
  gap: 22px;
  height: 112px;
  padding: 0 28px;
  border-radius: 24px;
  background: linear-gradient(90deg, #fff6f4 58%, #fdf0ee 58%);
  color: #262626;
  font-size: 44px;
  font-weight: 700;
`;

const FeedDot = styled.span`
  width: 46px;
  height: 46px;
  border-radius: 50%;
  background: #e05a55;
`;

const BottomBar = styled.footer`
  display: flex;
  height: 147px;
  border-top: 1px solid #d0d0d4;
  background: #f6f7fa;
  color: #666;
  font-size: 38px;
`;

const IndexBlock = styled.button`
  display: flex;
  flex-direction: column;
  align-items: center;
  flex: 298 1 0;
  padding-top: 10px;
`;

const UpMark = styled.span`
  border: 12px solid transparent;
  border-top: 0;
  border-bottom: 8px solid #777;
`;

const IndexValue = styled.span`
  margin-top: 2px;
  color: ${RED};
  font-size: 42px;
  line-height: 60px;
`;

const IndexRow = styled.span`
  display: flex;
  gap: 58px;
  padding-left: 30px;
  line-height: 50px;
`;

const IndexChange = styled.span`
  color: ${RED};
`;

const Tool = styled.button`
  display: flex;
  flex-direction: column;
  align-items: center;
  gap: 9px;
  flex: 240 1 0;
  padding-top: 9px;
  line-height: 54px;
`;

const SystemNav = styled.nav`
  display: flex;
  align-items: center;
  justify-content: center;
  gap: 210px;
  height: 132px;
  background: #fcfcfc;
`;

export default App;
